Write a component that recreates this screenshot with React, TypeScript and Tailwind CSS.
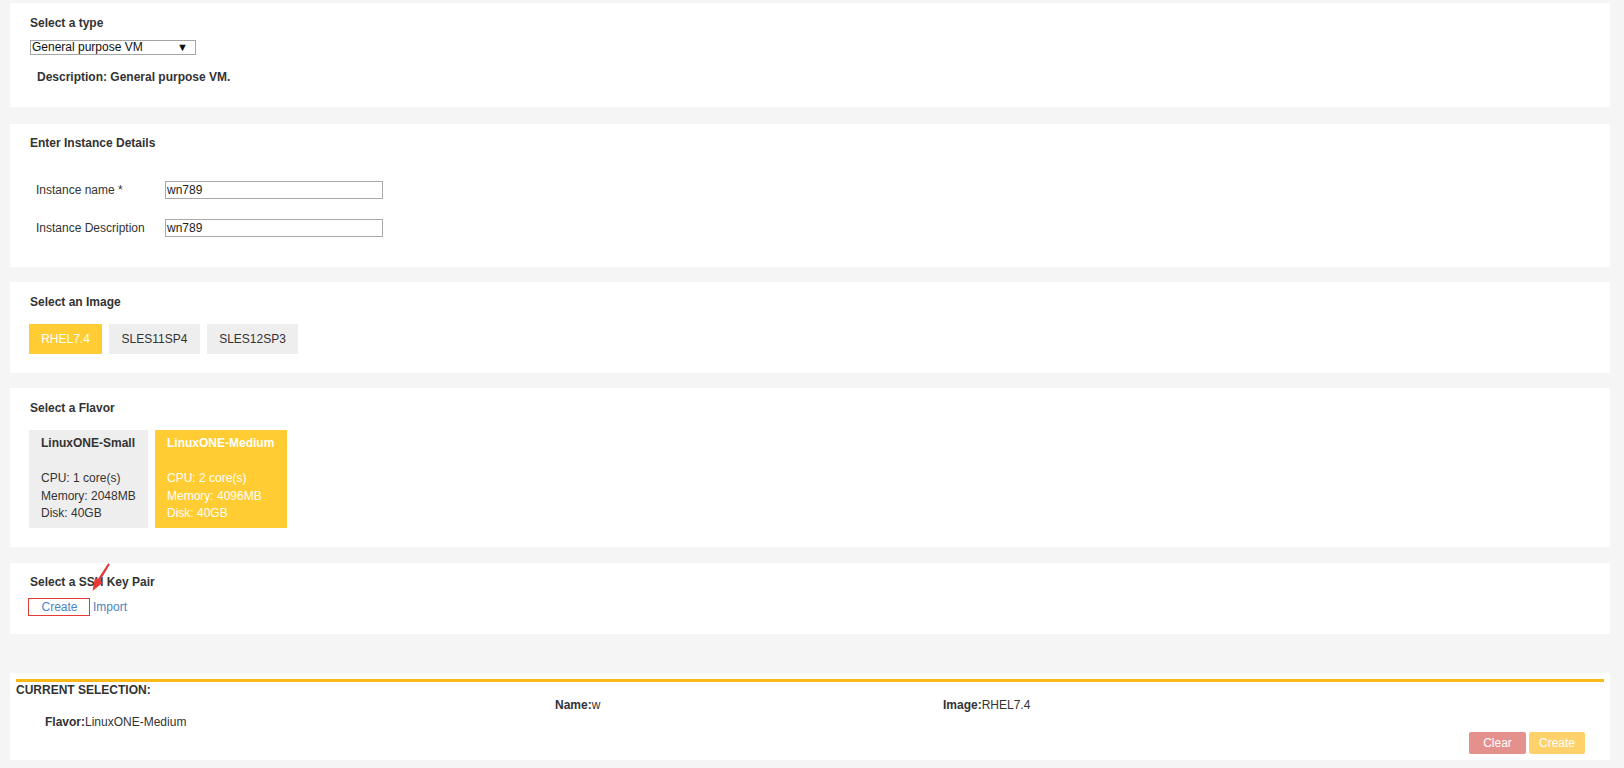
import React from 'react';

const images = ['RHEL7.4', 'SLES11SP4', 'SLES12SP3'];

const flavors = [
  { name: 'LinuxONE-Small', cpu: 1, mem: 2048, disk: 40, w: 'w-[119px]' },
  { name: 'LinuxONE-Medium', cpu: 2, mem: 4096, disk: 40, w: 'w-[132px]' },
];

function Panel({ className, children }: { className: string; children: React.ReactNode }) {
  return <div className={`ml-[10px] w-[1600px] bg-white ${className}`}>{children}</div>;
}

function Title({ children }: { children: React.ReactNode }) {
  return <div className="text-[12px] leading-[16px] font-bold text-[#333]">{children}</div>;
}

export default function App() {
  const selectedImage = 'RHEL7.4';
  const selectedFlavor = 'LinuxONE-Medium';

  return (
    <div
      className="w-[1624px] h-[768px] bg-[#f5f5f5] overflow-hidden pt-[3px] text-[#333]"
      style={{ fontFamily: '"Liberation Sans", Arial, sans-serif' }}
    >
      {/* type */}
      <Panel className="h-[104px] pl-[20px] pt-[12px]">
        <Title>Select a type</Title>
        <div className="mt-[9px] w-[166px] h-[15px] border border-[#a6a6a6] flex items-center justify-between pl-[1px] pr-[7px] text-[12px] leading-[13px] text-[#111]">
          <span>General purpose VM</span>
          <span className="text-[11px]">▼</span>
        </div>
        <div className="mt-[14px] ml-[7px] text-[12px] leading-[16px] font-bold">Description: General purpose VM.</div>
      </Panel>

      {/* details */}
      <Panel className="mt-[17px] h-[143px] pl-[20px] pt-[11px]">
        <Title>Enter Instance Details</Title>
        <div className="mt-[30px] ml-[6px] flex flex-col gap-[20px]">
          {[['Instance name *', 'wn789'], ['Instance Description', 'wn789']].map(([label, val]) => (
            <div key={label} className="flex items-center">
              <div className="w-[129px] text-[12px] leading-[16px]">{label}</div>
              <div className="w-[218px] h-[18px] border border-[#a9a9a9] pl-[1px] text-[12px] leading-[16px] text-[#222]">{val}</div>
            </div>
          ))}
        </div>
      </Panel>

      {/* image */}
      <Panel className="mt-[15px] h-[91px] pl-[19px] pt-[12px]">
        <div className="ml-px">
          <Title>Select an Image</Title>
        </div>
        <div className="mt-[14px] flex gap-[7px]">
          {images.map((img, i) => (
            <div
              key={img}
              className={`h-[30px] flex items-center justify-center text-[12px] ${
                i === 0 ? 'w-[73px]' : 'w-[91px]'
              } ${img === selectedImage ? 'bg-[#ffcc33] text-white' : 'bg-[#eeeeee] text-[#333]'}`}
            >
              {img}
            </div>
          ))}
        </div>
      </Panel>

      {/* flavor */}
      <Panel className="mt-[15px] h-[159px] pl-[19px] pt-[12px]">
        <div className="ml-px">
          <Title>Select a Flavor</Title>
        </div>
        <div className="mt-[14px] flex gap-[7px]">
          {flavors.map(f => (
            <div
              key={f.name}
              className={`${f.w} h-[98px] pl-[12px] pt-[5px] text-[12px] leading-[17.5px] ${
                f.name === selectedFlavor ? 'bg-[#ffcc33] text-white' : 'bg-[#eeeeee] text-[#333]'
              }`}
            >
              <div className="font-bold">{f.name}</div>
              <div className="h-[17.5px]" />
              <div>CPU: {f.cpu} core(s)</div>
              <div>Memory: {f.mem}MB</div>
              <div>Disk: {f.disk}GB</div>
            </div>
          ))}
        </div>
      </Panel>

      {/* ssh */}
      <Panel className="relative mt-[16px] h-[71px] pl-[18px] pt-[11px]">
        <div className="ml-[2px]">
          <Title>Select a SSH Key Pair</Title>
        </div>
        <div className="mt-[8px] flex items-center text-[12px] text-[#4a84c4]">
          <div className="w-[62px] h-[18px] border border-[#e53935] flex items-center justify-center leading-[16px]">
            <span className="ml-px">Create</span>
          </div>
          <span className="ml-[3px] leading-[16px]">Import</span>
        </div>
        {/* annotation arrow */}
        <svg className="absolute left-[78px] top-0 w-[24px] h-[30px]" viewBox="0 0 24 30">
          <path d="M20.2 0.2 L21.8 1.4 L12.2 17.6 L15 19.4 L4.5 28 L7 14.4 L9.8 16.2 Z" fill="#e53935" />
        </svg>
      </Panel>

      {/* current selection */}
      <Panel className="mt-[39px] h-[87px] pl-[6px] pt-[6px]">
        <div className="w-[1588px] h-[3px] bg-[#fbb917]" />
        <div className="mt-[1px] text-[12px] leading-[14px] font-bold">CURRENT SELECTION:</div>
        <div className="mt-px flex text-[12px] leading-[14px]">
          <div className="w-[539px] pl-[29px] pt-[17px]">
            <span className="font-bold">Flavor:</span>
            <span>LinuxONE-Medium</span>
          </div>
          <div className="w-[388px]">
            <span className="font-bold">Name:</span>
            <span>w</span>
          </div>
          <div>
            <span className="font-bold">Image:</span>
            <span>{selectedImage}</span>
          </div>
        </div>
        <div className="mt-[3px] pr-[25px] flex justify-end gap-[3px] text-[12px] text-white">
          <div className="w-[57px] h-[22px] rounded-[2px] bg-[#e4908d] flex items-center justify-center">Clear</div>
          <div className="w-[56px] h-[22px] rounded-[2px] bg-[#fed16a] flex items-center justify-center">Create</div>
        </div>
      </Panel>
    </div>
  );
}
